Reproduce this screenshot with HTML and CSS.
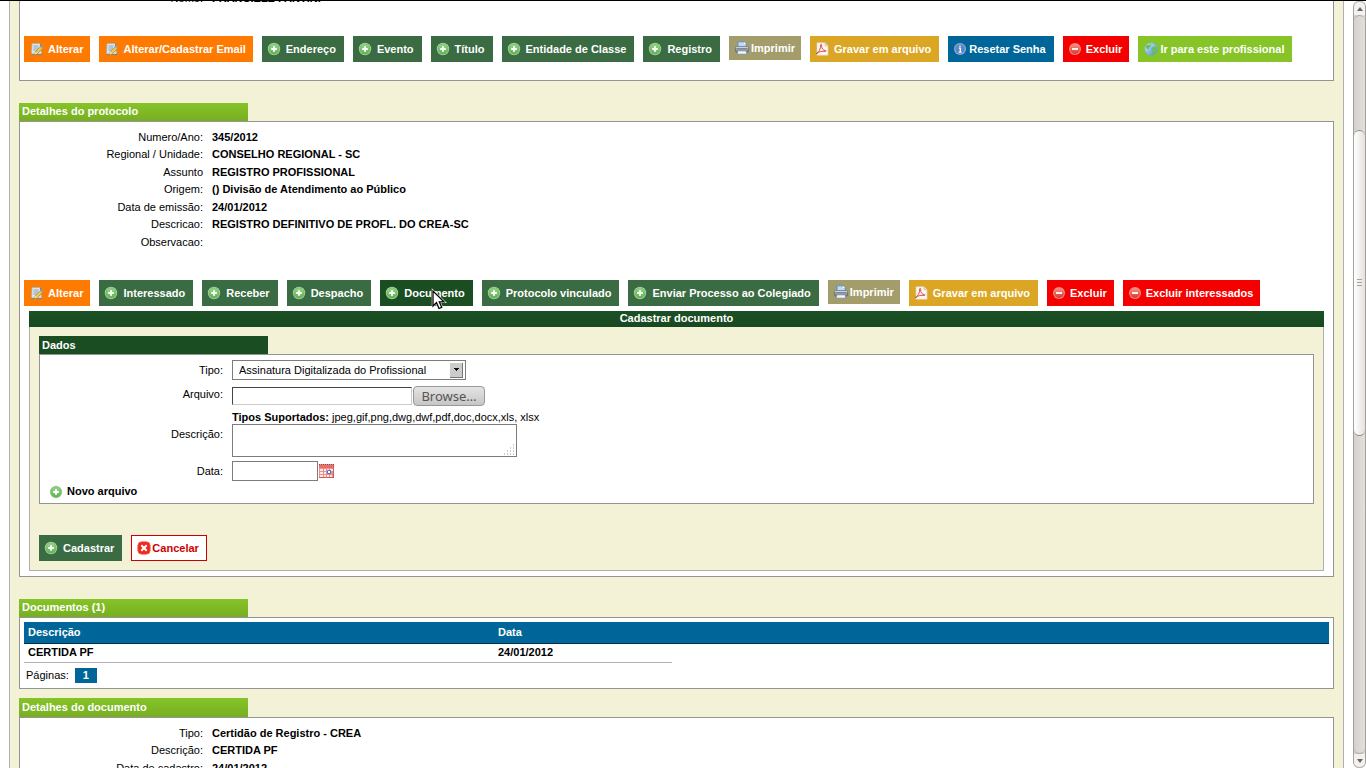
FILE: index.html
```html
<!DOCTYPE html>
<html lang="pt-BR">
<head>
<meta charset="utf-8">
<title>Detalhes do protocolo</title>
<link rel="stylesheet" href="styles.css">
</head>
<body>
<svg class="sprite" aria-hidden="true">
  <defs>
    <linearGradient id="g-plus" x1="0" y1="0" x2="0" y2="1"><stop offset="0" stop-color="#9ad48c"/><stop offset="1" stop-color="#5fb154"/></linearGradient>
    <linearGradient id="g-minus" x1="0" y1="0" x2="0" y2="1"><stop offset="0" stop-color="#f79083"/><stop offset="1" stop-color="#d83a2c"/></linearGradient>
    <linearGradient id="g-globe" x1="0" y1="0" x2="1" y2="1"><stop offset="0" stop-color="#d4eefa"/><stop offset="1" stop-color="#3f8fd0"/></linearGradient>
    <linearGradient id="g-print" x1="0" y1="0" x2="0" y2="1"><stop offset="0" stop-color="#eef0f5"/><stop offset="1" stop-color="#6e7482"/></linearGradient>
  </defs>
  <symbol id="plus" viewBox="0 0 14 14">
    <circle cx="7" cy="7" r="6.2" fill="#a9dc9c"/><circle cx="7" cy="7" r="5.2" fill="url(#g-plus)" stroke="#69b55d" stroke-width=".6"/>
    <path d="M7 4.2v5.6M4.2 7h5.6" stroke="#fff" stroke-width="1.9"/>
  </symbol>
  <symbol id="minus" viewBox="0 0 14 14">
    <circle cx="7" cy="7" r="6" fill="#f58a80"/><circle cx="7" cy="7" r="5" fill="url(#g-minus)"/>
    <path d="M4 7h6" stroke="#fff" stroke-width="1.8"/>
  </symbol>
  <symbol id="edit" viewBox="0 0 14 14">
    <path d="M2 1.500h8.500l1 10.500H1.500z" fill="#dbe7ee" stroke="#9fb3bd" stroke-width=".7"/>
    <path d="M3.500 4h5M3.500 6h5M3.300 8h4" stroke="#7d93a5" stroke-width=".8"/>
    <path d="M10.500 1.500v3" stroke="#5b91b5" stroke-width="1.200"/>
    <path d="M1 12.600h11.500" stroke="#7c8a72" stroke-width="1"/>
    <path d="M5.300 9.800l5.300-5.300 2 2-5.300 5.300-2.700.8z" fill="#f3c84b" stroke="#95722a" stroke-width=".6"/>
    <path d="M10.200 4.900l1.200-1.200 2 2-1.200 1.200z" fill="#8aa5b3"/>
    <path d="M5.400 9.800l1.900 2-2.700.8z" fill="#f4e2bd"/>
  </symbol>
  <symbol id="print" viewBox="0 0 14 14">
    <path d="M3 6V.8h6.200l2 2V6z" fill="#bfdcf6" stroke="#4b86c4" stroke-width=".8"/><path d="M9 1v2h2" fill="#fff"/>
    <rect x=".6" y="5.600" width="12.800" height="5.400" rx="1" fill="url(#g-print)" stroke="#5d6270" stroke-width=".7"/>
    <path d="M1.500 7.800h11" stroke="#464b59" stroke-width=".7"/>
    <path d="M2.800 9.800h8.400l.6 3.400H2.200z" fill="#eef5fc" stroke="#73829b" stroke-width=".7"/>
  </symbol>
  <symbol id="pdf" viewBox="0 0 14 14">
    <path d="M2 .8h8l3 3v9.400H2z" fill="#fbf6f1" stroke="#ded2bd" stroke-width=".7"/>
    <path d="M10 .8v3h3" fill="#eadfce" stroke="#c8b792" stroke-width=".6"/>
    <path d="M1 11.800C4 10.600 5.800 6.800 5.700 3c0-1 1-.8.9.2-.3 3.200 1.600 5.300 3.900 5.400 1 0 .8.9-.2.8C7.200 9 4.300 9.400 1 11.800z" fill="none" stroke="#d34236" stroke-width=".9"/>
  </symbol>
  <symbol id="info" viewBox="0 0 14 14">
    <circle cx="7" cy="7" r="6" fill="#8cabd8"/><circle cx="7" cy="7" r="4.800" fill="#5b86c6"/>
    <path d="M5.800 6.200h1.500v3.700M5.700 10.100h3M7 3.600v1.500" stroke="#fff" stroke-width="1.200" fill="none"/>
  </symbol>
  <symbol id="globe" viewBox="0 0 14 14">
    <circle cx="7" cy="7" r="6.400" fill="url(#g-globe)" stroke="#6fa7b4" stroke-width=".5"/>
    <path d="M1.500 5C2.500 2 5 1 7 1.200 8 2 7.500 3 6.500 3.500 7 5 5 5.500 4.500 7 3.500 7.500 2 6.500 1.500 5zM7.500 6c1.500-1.500 4-1.500 5-.5.5 3-1.500 5-3.500 6.500C8 10.500 8.500 9.500 7.500 8.500z" fill="#6cbc62"/>
    <path d="M2.500 3.500C4 1.800 6 1.400 8 1.800 6.500 2.600 4 3 2.500 3.500z" fill="#fff" opacity=".7"/>
  </symbol>
  <symbol id="cross" viewBox="0 0 14 14">
    <rect x=".8" y=".8" width="12.400" height="12.400" rx="4" fill="#f0281c" stroke="#f86055" stroke-width=".8"/>
    <path d="M4.300 4.300l5.400 5.400M9.700 4.300L4.300 9.700" stroke="#fff" stroke-width="2"/>
  </symbol>
  <symbol id="calendar" viewBox="0 0 15 14">
    <path d="M0 0h15v14H0z" fill="#f08f88"/><path d="M0 1h15v3H0z" fill="#e0726b"/>
    <path d="M0 .5h15" stroke="#a33d39" stroke-width="1" stroke-dasharray="1 1"/>
    <path d="M1 5h3v2H1zM5 5h2v2H5zM8 5h2v2H8zM11 5h3v2h-3zM1 8h3v2H1zM5 8h2v2H5zM1 11h3v2H1zM5 11h2v2H5zM8 11h2v2H8zM11 11h2v2h-2z" fill="#ffe9e6"/>
    <path d="M8.500 6.500h3v3h-3z" fill="#fff" stroke="#3f74d6"/><path d="M14.500 1v13M0 13.500h15" stroke="#c55f58"/>
  </symbol>
</svg>

<div class="viewport">
  <main class="page">
    <section class="panel panel-first">
      <dl class="details">
        <div class="detail"><dt>Nome:</dt><dd>FRANCIELE FANTINI</dd></div>
      </dl>
      <div class="toolbar">
        <button type="button" class="btn orange"><svg><use href="#edit"/></svg>Alterar</button>
        <button type="button" class="btn orange"><svg><use href="#edit"/></svg>Alterar/Cadastrar Email</button>
        <button type="button" class="btn"><svg><use href="#plus"/></svg>Endereço</button>
        <button type="button" class="btn"><svg><use href="#plus"/></svg>Evento</button>
        <button type="button" class="btn"><svg><use href="#plus"/></svg>Título</button>
        <button type="button" class="btn"><svg><use href="#plus"/></svg>Entidade de Classe</button>
        <button type="button" class="btn"><svg><use href="#plus"/></svg>Registro</button>
        <button type="button" class="btn print"><svg><use href="#print"/></svg>Imprimir</button>
        <button type="button" class="btn gold"><svg><use href="#pdf"/></svg>Gravar em arquivo</button>
        <button type="button" class="btn blue"><svg><use href="#info"/></svg>Resetar Senha</button>
        <button type="button" class="btn red"><svg><use href="#minus"/></svg>Excluir</button>
        <button type="button" class="btn lime"><svg><use href="#globe"/></svg>Ir para este profissional</button>
      </div>
    </section>

    <h2 class="tab">Detalhes do protocolo</h2>
    <section class="panel panel-protocol">
      <dl class="details">
        <div class="detail"><dt>Numero/Ano:</dt><dd>345/2012</dd></div>
        <div class="detail"><dt>Regional / Unidade:</dt><dd>CONSELHO REGIONAL - SC</dd></div>
        <div class="detail"><dt>Assunto</dt><dd>REGISTRO PROFISSIONAL</dd></div>
        <div class="detail"><dt>Origem:</dt><dd>() Divisão de Atendimento ao Público</dd></div>
        <div class="detail"><dt>Data de emissão:</dt><dd>24/01/2012</dd></div>
        <div class="detail"><dt>Descricao:</dt><dd>REGISTRO DEFINITIVO DE PROFL. DO CREA-SC</dd></div>
        <div class="detail"><dt>Observacao:</dt><dd></dd></div>
      </dl>
      <div class="toolbar">
        <button type="button" class="btn orange"><svg><use href="#edit"/></svg>Alterar</button>
        <button type="button" class="btn"><svg><use href="#plus"/></svg>Interessado</button>
        <button type="button" class="btn"><svg><use href="#plus"/></svg>Receber</button>
        <button type="button" class="btn"><svg><use href="#plus"/></svg>Despacho</button>
        <button type="button" class="btn active"><svg><use href="#plus"/></svg>Documento<svg class="pointer" viewBox="0 0 13 20"><path d="M1 1v15l3.500-3.300L7 18.500l2.700-1.200-2.400-5.500h4.700z" fill="#000" stroke="#fff" stroke-width="2.400"/><path d="M1 1v15l3.500-3.300L7 18.500l2.700-1.200-2.400-5.500h4.700z" fill="#fff" stroke="#000" stroke-width="1.300"/></svg></button>
        <button type="button" class="btn"><svg><use href="#plus"/></svg>Protocolo vinculado</button>
        <button type="button" class="btn"><svg><use href="#plus"/></svg>Enviar Processo ao Colegiado</button>
        <button type="button" class="btn print"><svg><use href="#print"/></svg>Imprimir</button>
        <button type="button" class="btn gold"><svg><use href="#pdf"/></svg>Gravar em arquivo</button>
        <button type="button" class="btn red"><svg><use href="#minus"/></svg>Excluir</button>
        <button type="button" class="btn red"><svg><use href="#minus"/></svg>Excluir interessados</button>
      </div>

      <form class="register">
        <h3 class="register-title">Cadastrar documento</h3>
        <div class="register-body">
          <h4 class="tab dark">Dados</h4>
          <div class="panel fields">
            <div class="field">
              <label for="tipo">Tipo:</label>
              <select id="tipo"><option>Assinatura Digitalizada do Profissional</option></select>
            </div>
            <div class="field field-file">
              <label for="arquivo">Arquivo:</label>
              <input id="arquivo" class="file-name" type="text" readonly>
              <button type="button" class="browse">Browse…</button>
            </div>
            <p class="hint"><b>Tipos Suportados:</b> jpeg,gif,png,dwg,dwf,pdf,doc,docx,xls, xlsx</p>
            <div class="field field-text">
              <label for="descricao">Descrição:</label>
              <span class="area"><textarea id="descricao"></textarea><svg class="grip" viewBox="0 0 11 11"><path d="M9 1h1M9 4h1M6 4h1M9 7h1M6 7h1M3 7h1M9 10h1M6 10h1M3 10h1M0 10h1" stroke="#999" stroke-width="1"/></svg></span>
            </div>
            <div class="field field-date">
              <label for="data">Data:</label>
              <input id="data" class="date" type="text">
              <button type="button" class="calendar" aria-label="Calendário"><svg><use href="#calendar"/></svg></button>
            </div>
            <button type="button" class="add"><svg><use href="#plus"/></svg>Novo arquivo</button>
          </div>
          <div class="actions">
            <button type="button" class="btn"><svg><use href="#plus"/></svg>Cadastrar</button>
            <button type="button" class="btn cancel"><svg><use href="#cross"/></svg>Cancelar</button>
          </div>
        </div>
      </form>
    </section>

    <h2 class="tab">Documentos (1)</h2>
    <section class="panel panel-docs">
      <table class="docs">
        <colgroup><col class="col-desc"><col class="col-date"><col></colgroup>
        <thead><tr><th>Descrição</th><th>Data</th><th></th></tr></thead>
        <tbody><tr><td>CERTIDA PF</td><td>24/01/2012</td></tr></tbody>
      </table>
      <nav class="pages">Páginas: <a href="#">1</a></nav>
    </section>

    <h2 class="tab tab-tall">Detalhes do documento</h2>
    <section class="panel panel-last">
      <dl class="details">
        <div class="detail"><dt>Tipo:</dt><dd>Certidão de Registro - CREA</dd></div>
        <div class="detail"><dt>Descrição:</dt><dd>CERTIDA PF</dd></div>
        <div class="detail"><dt>Data de cadastro:</dt><dd>24/01/2012</dd></div>
      </dl>
    </section>
  </main>
  <div class="scrollbar" aria-hidden="true">
    <span class="arrow"><svg viewBox="0 0 6 4"><path d="M3 0l3 4H0z"/></svg></span>
    <div class="track">
      <span class="before"></span>
      <span class="thumb"><i></i><i></i><i></i></span>
      <span class="after"></span>
    </div>
    <span class="arrow down"><svg viewBox="0 0 6 4"><path d="M0 0h6L3 4z"/></svg></span>
  </div>
</div>
</body>
</html>
```

FILE: styles.css
```css
* { box-sizing: border-box; }

body {
  margin: 0;
  background: #fff;
  color: #000;
  font: 11px/17px "Liberation Sans", Arial, sans-serif;
}

button, input, select, textarea { font: inherit; margin: 0; }
h2, h3, h4, p, dl, dd { margin: 0; font-size: 11px; }
.sprite { position: absolute; width: 0; height: 0; }

.viewport {
  display: flex;
  height: 100vh;
  overflow: hidden;
  border-top: 1px solid #000;
}

.page {
  flex: 1;
  height: max-content;
  margin: 0 9px;
  padding: 0 9px;
  border: solid #b0b0b0;
  border-width: 0 1px;
  background: #f4f2d6;
}

/* Panels and their tabs */
.panel { border: 1px solid #949494; background: #fff; }
.panel-first { margin: -11px 0 22px; padding-bottom: 18px; border-top: 0; }
.panel-protocol { margin-bottom: 22px; padding: 7px 0 5px; }
.panel-docs { margin-bottom: 9px; padding: 4px; }
.panel-last { padding: 7px 0; }

.tab {
  width: 229px;
  padding: 0 0 2px 3px;
  background: linear-gradient(#86c427, #77ae22);
  color: #fff;
  line-height: 16px;
}
.tab-tall { padding-bottom: 1px; line-height: 18px; }
.tab.dark { padding-bottom: 0; background: #1b4d23; line-height: 18px; }

.detail {
  display: grid;
  grid-template-columns: 183px 1fr;
  column-gap: 9px;
  min-height: 17px;
}
.detail:nth-child(even) { margin-bottom: 1px; }
.detail dt { text-align: right; }
.detail dd { font-weight: bold; }

/* Toolbars */
.toolbar { display: flex; gap: 9px; align-items: flex-start; padding: 0 4px; }
.panel-first .toolbar { margin-top: 29px; }
.panel-protocol .toolbar { margin-top: 29px; }

.btn {
  position: relative;
  display: flex;
  align-items: center;
  gap: 5px;
  height: 26px;
  padding: 0 8px 0 5px;
  border: 0;
  background: #3a6b42;
  color: #fff;
  font-weight: bold;
  white-space: nowrap;
}
.btn svg { width: 14px; height: 14px; flex: none; }
.btn.active { background: #1b4d23; }
.btn.orange { background: #ff7a00; padding: 0 7px 0 6px; gap: 4px; }
.btn.print { height: 24px; padding: 0 6px; gap: 2px; background: #a29d6b; }
.btn.gold { background: #dba623; }
.btn.blue { background: #006699; gap: 2px; }
.btn.red { background: #f40000; padding-right: 7px; gap: 4px; }
.btn.lime { background: #86c427; padding-left: 6px; gap: 2px; }
.btn.cancel { padding-right: 7px; border: 1px solid #c00; background: #fff; color: #c00; gap: 1px; }
.btn .pointer { position: absolute; left: 52px; top: 10px; width: 13px; height: 20px; overflow: visible; z-index: 1; }

/* Document form */
.register { margin: 5px 9px 0; }
.register-title {
  padding-bottom: 2px;
  background: linear-gradient(#1b5025, #194820);
  color: #fff;
  line-height: 14px;
  text-align: center;
}
.register-body {
  padding: 9px;
  border: 1px solid #b0b0b0;
  border-top: 0;
  background: #f4f2d6;
}
.fields { padding: 5px 0 3px; }

.field { display: flex; align-items: center; min-height: 20px; margin-bottom: 6px; }
.field label { width: 183px; margin-right: 9px; text-align: right; }
.field-text { margin-bottom: 4px; }
.field-date { margin-bottom: 2px; }
.field-file label { align-self: flex-start; }

.field select {
  width: 234px;
  height: 20px;
  padding: 0 20px 0 6px;
  border: 1px solid #7c7c7c;
  border-radius: 0;
  appearance: none;
  background:
    linear-gradient(#111, #111) 221px 7px / 5px 1px no-repeat,
    linear-gradient(#111, #111) 222px 8px / 3px 1px no-repeat,
    linear-gradient(#111, #111) 223px 9px / 1px 1px no-repeat,
    linear-gradient(#777, #777) 229px 2px / 1px 15px no-repeat,
    linear-gradient(#777, #777) 217px 16px / 13px 1px no-repeat,
    linear-gradient(#ccc, #ccc) 217px 2px / 13px 15px no-repeat,
    #fff;
  color: #000;
}
.field input { height: 20px; padding: 0 3px; border: 1px solid #7c7c7c; }
.field .file-name {
  width: 180px;
  height: 18px;
  margin-right: 1px;
  border-color: #444 #ccc #ccc #444;
}
.field .date { width: 86px; }

.browse {
  width: 72px;
  height: 20px;
  padding: 0;
  border: 1px solid #999;
  border-radius: 4px;
  background: linear-gradient(#e4e4e4, #c6c6c6);
  color: #555;
  font: 13px/16px "Noto Sans", sans-serif;
}
.hint { margin-left: 192px; padding-bottom: 2px; line-height: 10px; }

.area { position: relative; display: flex; }
.area textarea { width: 285px; height: 33px; padding: 2px; border: 1px solid #7c7c7c; resize: none; }
.field-text label { align-self: flex-start; line-height: 20px; }
.grip { position: absolute; right: 2px; bottom: 2px; width: 11px; height: 11px; }

.calendar { display: flex; margin-left: 1px; padding: 0; border: 0; background: none; }
.calendar svg { width: 15px; height: 14px; }
.add {
  display: flex;
  align-items: center;
  gap: 4px;
  margin-left: 9px;
  padding: 0;
  border: 0;
  background: none;
  color: #000;
  font-weight: bold;
}
.add svg { width: 14px; height: 14px; }
.actions { display: flex; gap: 9px; margin-top: 31px; }

/* Documents table */
.docs { width: 100%; table-layout: fixed; border-collapse: collapse; }
.col-desc { width: 470px; }
.col-date { width: 178px; }
.docs th, .docs td { padding: 0 4px; text-align: left; font-weight: bold; }
.docs th { height: 21px; background: #006699; border-bottom: 1px solid #03304a; color: #fff; }
.docs td { height: 19px; border-bottom: 1px solid #b0b0b0; }

.pages { display: flex; align-items: center; gap: 6px; padding: 5px 2px 1px; line-height: 15px; }
.pages a {
  padding: 0 8px;
  background: #006699;
  color: #fff;
  font-weight: bold;
  text-decoration: none;
}

/* Window scrollbar */
.scrollbar {
  display: flex;
  flex-direction: column;
  width: 13px;
  border: solid #a5a09b;
  border-width: 0 1px;
  border-radius: 6px;
  background: linear-gradient(90deg, #d5d0cd, #e2dfdd);
}
.arrow {
  display: flex;
  align-items: center;
  justify-content: center;
  height: 14px;
  border-top: 1px solid #b5b1ae;
  border-radius: 6px 6px 0 0;
  background: #f3f2f1;
}
.arrow.down { border-top: 0; border-bottom: 1px solid #b5b1ae; border-radius: 0 0 6px 6px; }
.arrow svg { width: 6px; height: 4px; fill: #666; }
.track {
  display: flex;
  flex-direction: column;
  flex: 1;
  border: solid #aaa5a1;
  border-width: 1px 0;
  border-radius: 6px;
}
.before { flex: 114; }
.thumb {
  display: flex;
  flex: 306;
  flex-direction: column;
  align-items: center;
  justify-content: center;
  gap: 2px;
  border: solid #8f8b87;
  border-width: 1px 0;
  border-radius: 6px;
  background: linear-gradient(90deg, #fff, #e4e2e0);
}
.thumb i { width: 5px; height: 1px; background: #a5a19d; }
.after { flex: 318; }
```
